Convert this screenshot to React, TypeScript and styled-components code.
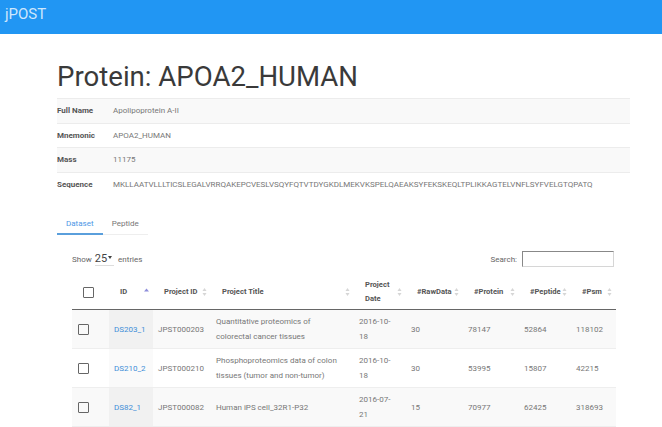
import * as React from "react";
import styled, { createGlobalStyle } from "styled-components";

const GlobalStyle = createGlobalStyle`
	body {
		margin: 0;
		background: #fff;
		font-family: Roboto, "Liberation Sans", sans-serif;
	}
`;

const Navbar = styled.div`
	align-items: center;
	background: #2196f3;
	display: flex;
	height: 34px;
	padding-left: 5px;
`;

const Brand = styled.span`
	color: rgba(255, 255, 255, 0.78);
	font-size: 15px;
	margin-top: -6px;
`;

const Container = styled.div`
	padding: 0 32px 0 57px;
`;

const Title = styled.h1`
	color: #3a3a3a;
	font-size: 27.6px;
	font-weight: 400;
	line-height: 34px;
	margin: 26px 0 4px;
`;

const InfoTable = styled.div`
	display: flex;
	flex-direction: column;
`;

const InfoRow = styled.div<{ $shaded: boolean }>`
	align-items: center;
	background: ${(p) => (p.$shaded ? "#f9f9f9" : "#fff")};
	border-top: 1px solid #ececec;
	display: grid;
	font-size: 8px;
	grid-template-columns: 56px 1fr;
	height: 23.5px;
`;

const InfoLabel = styled.span`
	color: #555;
	font-weight: 700;
`;

const InfoValue = styled.span`
	color: #777;
	white-space: nowrap;
`;

const Tabs = styled.div`
	border-bottom: 1px solid #eee;
	display: flex;
	margin-top: 16px;
	width: 91px;
`;

const Tab = styled.div<{ $active?: boolean }>`
	border-bottom: 2px solid ${(p) => (p.$active ? "#5a9fdc" : "transparent")};
	color: ${(p) => (p.$active ? "#4d97e6" : "#777")};
	font-size: 8px;
	height: 21px;
	line-height: 24px;
	margin-bottom: -1px;
	text-align: center;
	width: 46px;
`;

const Wrapper = styled.div`
	padding: 0 14px 0 15px;
`;

const Controls = styled.div`
	align-items: center;
	color: #666;
	display: flex;
	font-size: 8px;
	height: 16px;
	justify-content: space-between;
	margin-top: 16px;
`;

const LengthSelect = styled.span`
	align-items: center;
	border-bottom: 1px solid #ddd;
	color: #444;
	display: inline-flex;
	font-size: 11px;
	margin: 0 4px 0 3px;
	padding-right: 2px;
`;

const Caret = styled.span`
	border-left: 2px solid transparent;
	border-right: 2px solid transparent;
	border-top: 3px solid #444;
	margin-left: 1px;
	margin-top: -3px;
`;

const SearchBox = styled.label`
	align-items: center;
	display: flex;
	gap: 5px;
`;

const SearchInput = styled.input`
	border: 1px solid #d6d6d6;
	border-left-color: #888;
	border-top-color: #888;
	box-sizing: border-box;
	height: 16px;
	margin: 0 2px 0 0;
	padding: 0;
	width: 92px;
`;

const Table = styled.table`
	border-collapse: collapse;
	margin-top: 8px;
	table-layout: fixed;
	width: 544px;
`;

const Th = styled.th<{ $wrap?: boolean }>`
	border-bottom: 1.5px solid #666;
	color: #555;
	font-size: 7.6px;
	font-weight: 700;
	height: 34px;
	line-height: 14px;
	padding: 0 14px 0 11px;
	position: relative;
	text-align: left;
	white-space: ${(p) => (p.$wrap ? "normal" : "nowrap")};
`;

const SortIcon = styled.svg`
	position: absolute;
	right: 4px;
	top: 50%;
	transform: translateY(-50%);
`;

const Tr = styled.tr<{ $shaded: boolean }>`
	background: ${(p) => (p.$shaded ? "#f9f9f9" : "#fff")};
	border-bottom: 1px solid #eee;
`;

const Td = styled.td<{ $sorted?: boolean; $shaded?: boolean; $wide?: boolean }>`
	background: ${(p) =>
		p.$sorted ? (p.$shaded ? "#f1f1f1" : "#fafafa") : "transparent"};
	color: #777;
	font-size: 8px;
	height: 30px;
	line-height: 15px;
	padding: 4px ${(p) => (p.$wide ? "14px" : "10px")} 4px 5px;
	vertical-align: middle;
`;

const Link = styled.a`
	color: #3f8ed8;
	text-decoration: none;
`;

const Checkbox = styled.span<{ $head?: boolean }>`
	border: 1px solid #666;
	border-radius: 1px;
	box-sizing: border-box;
	display: block;
	height: 11px;
	margin-left: ${(p) => (p.$head ? "0px" : "1px")};
	width: 11px;
`;

const Sort = ({ asc }: { asc?: boolean }) => (
	<SortIcon width="5" height="9" viewBox="0 0 5 9">
		{asc ? (
			<polygon points="2.5,1 5,4 0,4" fill="#8e8edb" />
		) : (
			<>
				<polygon points="2.5,0.5 4.5,3.5 0.5,3.5" fill="#d6d6d6" />
				<polygon points="0.5,5.5 4.5,5.5 2.5,8.5" fill="#d6d6d6" />
			</>
		)}
	</SortIcon>
);

const info = [
	["Full Name", "Apolipoprotein A-II"],
	["Mnemonic", "APOA2_HUMAN"],
	["Mass", "11175"],
	[
		"Sequence",
		"MKLLAATVLLLTICSLEGALVRRQAKEPCVESLVSQYFQTVTDYGKDLMEKVKSPELQAEAKSYFEKSKEQLTPLIKKAGTELVNFLSYFVELGTQPATQ",
	],
];

const rows = [
	["DS203_1", "JPST000203", "Quantitative proteomics of colorectal cancer tissues", "2016-10-18", "30", "78147", "52864", "118102"],
	["DS210_2", "JPST000210", "Phosphoproteomics data of colon tissues (tumor and non-tumor)", "2016-10-18", "30", "53995", "15807", "42215"],
	["DS82_1", "JPST000082", "Human iPS cell_32R1-P32", "2016-07-21", "15", "70977", "62425", "318693"],
];

const widths = [37, 44, 58, 143, 52, 57, 56, 52, 45];
const headers = ["ID", "Project ID", "Project Title", "Project Date", "#RawData", "#Protein", "#Peptide", "#Psm"];

const App = () => {
	return (
		<React.Fragment>
			<GlobalStyle />
			<Navbar>
				<Brand>jPOST</Brand>
			</Navbar>
			<Container>
				<Title>Protein: APOA2_HUMAN</Title>
				<InfoTable>
					{info.map(([label, value], i) => (
						<InfoRow key={label} $shaded={i % 2 === 0}>
							<InfoLabel>{label}</InfoLabel>
							<InfoValue>{value}</InfoValue>
						</InfoRow>
					))}
				</InfoTable>
				<Tabs>
					<Tab $active>Dataset</Tab>
					<Tab>Peptide</Tab>
				</Tabs>
				<Wrapper>
					<Controls>
						<span>
							Show
							<LengthSelect>
								25<Caret />
							</LengthSelect>
							entries
						</span>
						<SearchBox>
							Search:
							<SearchInput type="text" />
						</SearchBox>
					</Controls>
					<Table>
						<colgroup>
							{widths.map((w, i) => (
								<col key={i} style={{ width: w }} />
							))}
						</colgroup>
						<thead>
							<tr>
								<Th>
									<Checkbox $head />
								</Th>
								{headers.map((h, i) => (
									<Th key={h} $wrap={h === "Project Date"}>
										{h}
										<Sort asc={i === 0} />
									</Th>
								))}
							</tr>
						</thead>
						<tbody>
							{rows.map((r, i) => (
								<Tr key={r[0]} $shaded={i % 2 === 0}>
									<Td>
										<Checkbox />
									</Td>
									<Td $sorted $shaded={i % 2 === 0}>
										<Link href="#">{r[0]}</Link>
									</Td>
									{r.slice(1).map((c, j) => (
										<Td key={j} $wide={j === 1}>
											{c}
										</Td>
									))}
								</Tr>
							))}
						</tbody>
					</Table>
				</Wrapper>
			</Container>
		</React.Fragment>
	);
};

export default App;
